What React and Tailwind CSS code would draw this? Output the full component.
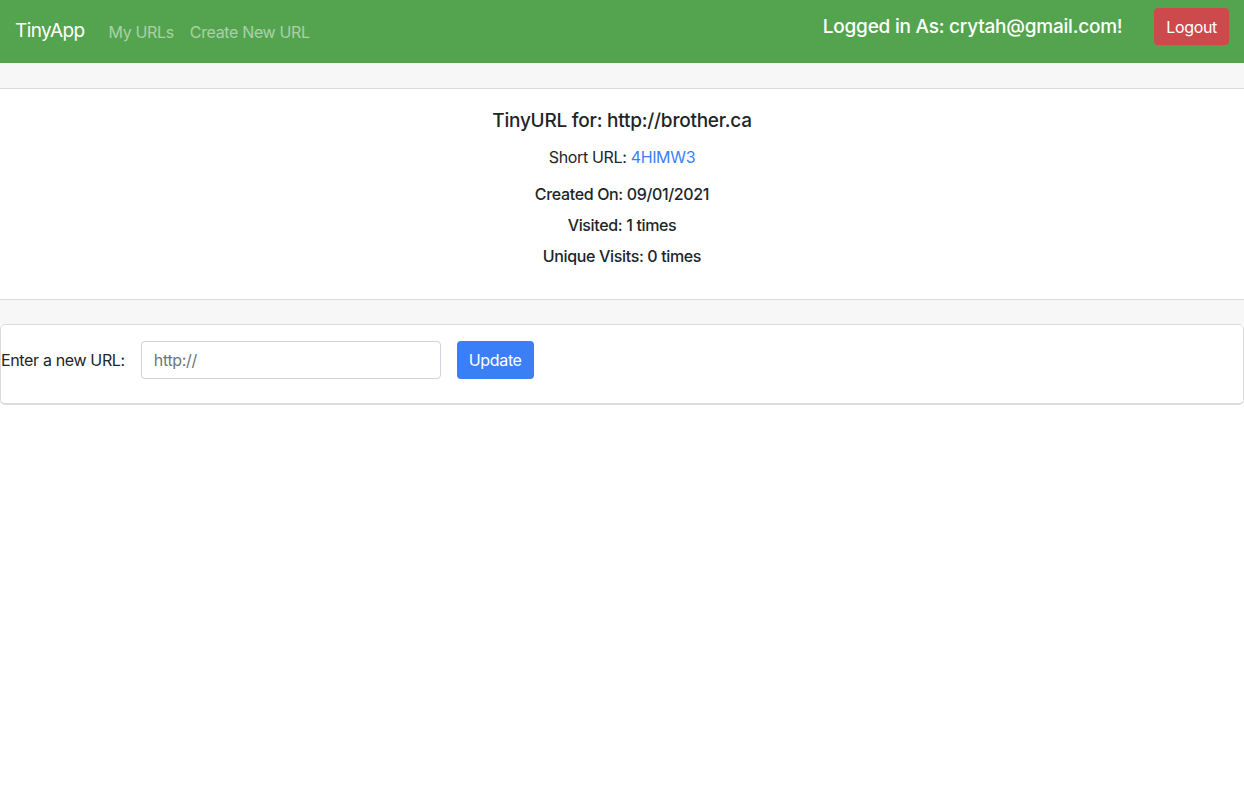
import React from 'react';

export default function App() {
  return (
    <div className="min-h-screen bg-white text-[#212529] tracking-[-0.022em]" style={{ fontFamily: 'Inter, "Noto Sans", sans-serif' }}>
      {/* Navbar */}
      <nav className="h-[63px] bg-[#54a44f] flex justify-between px-4">
        <div className="flex items-center">
          <span className="text-[19px] text-white mr-4 -ml-px tracking-[-0.03em]">TinyApp</span>
          <a className="px-2 text-[16px] text-white/50">My URLs</a>
          <a className="px-2 text-[16px] text-white/50">Create New URL</a>
        </div>
        <div className="flex items-start pt-2">
          <span className="text-[19px] font-medium text-white mt-[5px] mr-8 tracking-[-0.012em]">Logged in As: crytah@gmail.com!</span>
          <button className="h-[37px] px-3 rounded bg-[#cc4a4c] text-white text-[16px] -mr-[1px]">Logout</button>
        </div>
      </nav>

      {/* URL card */}
      <div>
        <div className="h-[26px] bg-[#f7f7f7] border-b border-[#dcdcdc]"></div>
        <div className="pt-5 pb-[31px] text-center">
          <h5 className="text-[19px] font-medium leading-6 mb-3 tracking-[-0.012em]">TinyURL for: http://brother.ca</h5>
          <p className="text-[16px] leading-6 mb-[13px]">Short URL: <a className="text-[#3b7ff6]">4HIMW3</a></p>
          <p className="text-[16px] font-medium leading-6 mb-[7px]">Created On: 09/01/2021</p>
          <p className="text-[16px] font-medium leading-6 mb-[7px]">Visited: 1 times</p>
          <p className="text-[16px] font-medium leading-6">Unique Visits: 0 times</p>
        </div>
        <div className="h-[25px] bg-[#f7f7f7] border-t border-[#dcdcdc]"></div>
      </div>

      {/* Edit form card */}
      <div className="border border-[#dcdcdc] border-b-2 rounded-[5px] pt-4 pb-[24px]">
        <form className="flex items-center">
          <label className="text-[16px] mr-4">Enter a new URL:</label>
          <input
            className="w-[300px] h-[38px] border border-[#ced4da] rounded-[4px] px-3 text-[16px] placeholder:text-[#6c757d] outline-none"
            placeholder="http://"
          />
          <button type="button" className="ml-4 h-[38px] px-3 rounded-[4px] bg-[#3b7ff6] text-white text-[16px]">Update</button>
        </form>
      </div>
    </div>
  );
}
